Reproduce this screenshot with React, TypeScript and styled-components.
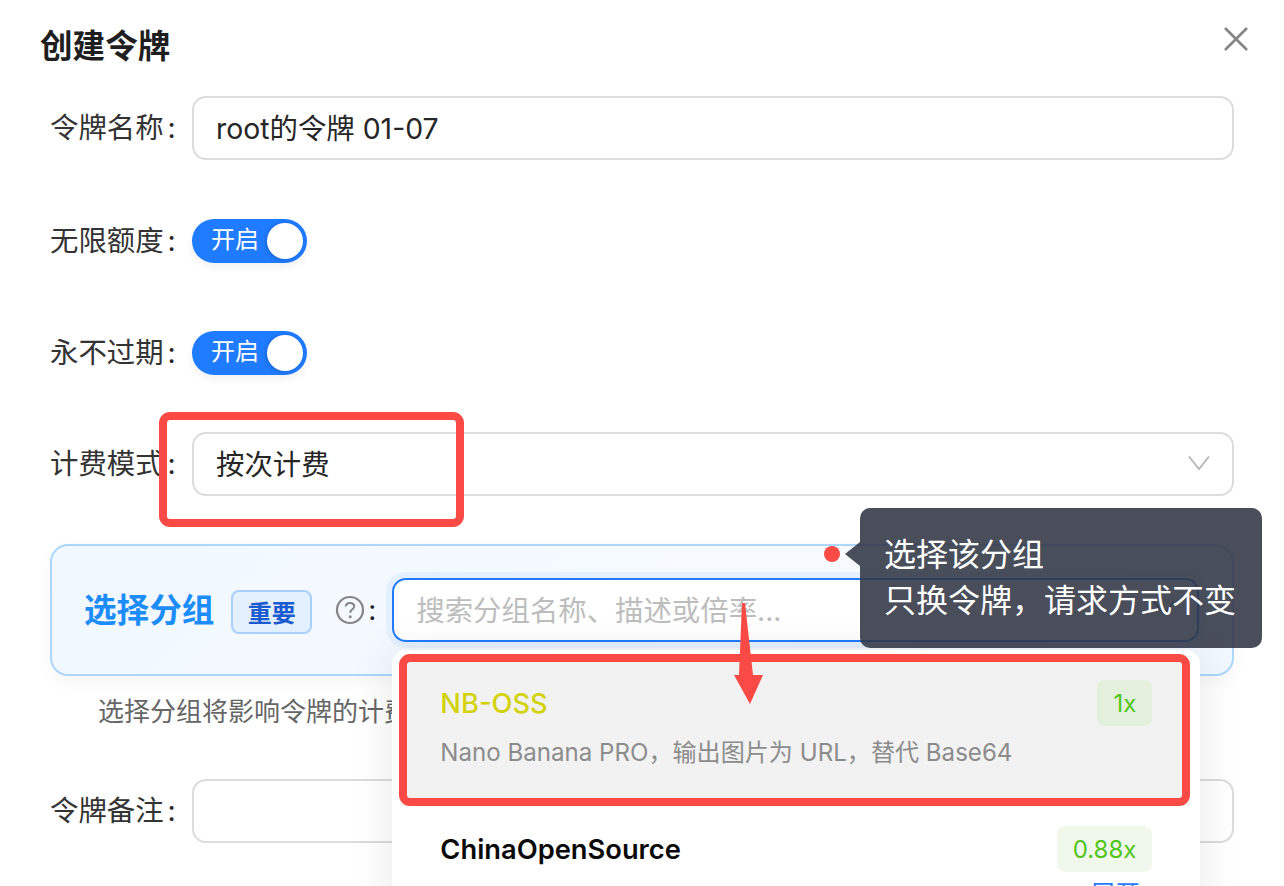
import React from "react";
import styled, { createGlobalStyle } from "styled-components";

const GlobalStyle = createGlobalStyle`
  html, body {
    margin: 0;
    padding: 0;
    background: #fff;
    overflow: hidden;
  }
  body {
    font-family: "Inter", "Noto Sans CJK SC", "Noto Sans", sans-serif;
    color: #262626;
  }
  * {
    box-sizing: border-box;
  }
`;

const Modal = styled.div`
  position: relative;
  width: 1284px;
  height: 886px;
  overflow: hidden;
  background: #fff;
`;

const Header = styled.header`
  display: flex;
  justify-content: space-between;
  align-items: flex-start;
  height: 96px;
  padding: 26px 35px 0 40px;
`;

const Title = styled.h2`
  margin: 0;
  font-size: 32.6px;
  line-height: 40px;
  font-weight: 700;
  color: #1f1f1f;
`;

const CloseButton = styled.button`
  display: flex;
  width: 26px;
  height: 26px;
  padding: 0;
  border: 0;
  background: none;
  color: #858585;
`;

const Form = styled.div`
  display: flex;
  flex-direction: column;
  padding: 0 50px;
`;

const Row = styled.div<{ $gap: number }>`
  display: flex;
  align-items: center;
  margin-bottom: ${(p) => p.$gap}px;
`;

const Label = styled.label`
  flex: 0 0 142px;
  font-size: 28.4px;
  line-height: 40px;
  color: #333;
  white-space: nowrap;

  &::after {
    content: ":";
    margin-left: 4px;
    color: #262626;
  }
`;

const Field = styled.div`
  flex: 1;
  display: flex;
  align-items: center;
  justify-content: space-between;
  height: 64px;
  padding: 0 22px 3px;
  border: 2px solid #dcdcdc;
  border-radius: 14px;
  background: #fff;
  font-size: 28.4px;
  color: #262626;
`;

const Toggle = styled.div`
  display: flex;
  align-items: center;
  justify-content: space-between;
  width: 115px;
  height: 44px;
  padding: 0 4px 0 19px;
  border-radius: 22px;
  background: #1f7bff;
  box-shadow: 0 4px 8px rgba(0, 0, 0, 0.06);
  color: #fff;
  font-size: 24px;
  line-height: 40px;
`;

const ToggleText = styled.span`
  margin-top: -2px;
`;

const Knob = styled.span`
  width: 36px;
  height: 36px;
  border-radius: 50%;
  background: #fff;
  box-shadow: -1px 1px 4px rgba(0, 0, 0, 0.2);
`;

const GroupCard = styled.section`
  position: relative;
  display: flex;
  align-items: center;
  height: 132px;
  padding: 0 33px 0 32px;
  border: 2px solid #acd6fc;
  border-radius: 18px;
  background: linear-gradient(135deg, #f1f8ff 0%, #f6faff 60%, #f2f8ff 100%);
  box-shadow: 0 6px 18px rgba(0, 0, 0, 0.04);
`;

const GroupTitle = styled.span`
  font-size: 32.6px;
  line-height: 40px;
  font-weight: 700;
  color: #1c8cf8;
  white-space: nowrap;
`;

const ImportantTag = styled.span`
  display: flex;
  align-items: center;
  justify-content: center;
  width: 81px;
  height: 44px;
  margin: 3px 23px 0 17px;
  border: 2px solid #a8d0fa;
  border-radius: 8px;
  background: #e3f0fe;
  color: #1a5bd0;
  font-size: 24px;
  font-weight: 700;
`;

const HelpIcon = styled.svg`
  width: 30px;
  height: 30px;
  color: #858585;
`;

const Colon = styled.span`
  width: 27px;
  padding-left: 3px;
  font-size: 28px;
  line-height: 40px;
  color: #1f1f1f;
`;

const GroupSearch = styled.div`
  position: relative;
  flex: 1;
  display: flex;
  align-items: center;
  justify-content: space-between;
  height: 64px;
  padding: 0 22px 4px;
  border: 2px solid #1f7bff;
  border-radius: 14px;
  background: #fff;
  box-shadow: 0 0 0 6px rgba(31, 123, 255, 0.07);
  font-size: 28.4px;
  color: #bdbdbd;
`;

const Dropdown = styled.div`
  position: absolute;
  top: 70px;
  left: -2px;
  z-index: 2;
  width: 808px;
  padding-top: 10px;
  border-radius: 14px;
  background: #fff;
  box-shadow: 0 4px 40px 4px rgba(0, 0, 0, 0.08);
`;

const Option = styled.div<{ $active?: boolean }>`
  height: 146px;
  margin: 0 10px 0 8px;
  padding: 20px 38px 0 41px;
  background: ${(p) => (p.$active ? "#f3f2f3" : "transparent")};
`;

const OptionHead = styled.div`
  display: flex;
  align-items: center;
  justify-content: space-between;
  height: 46px;
`;

const OptionName = styled.span<{ $color: string; $weight: number }>`
  font-size: 27.3px;
  color: ${(p) => p.$color};
  font-weight: ${(p) => p.$weight};
  margin-left: -1px;
`;

const Ratio = styled.span<{ $bg: string }>`
  display: flex;
  align-items: center;
  height: 46px;
  padding: 0 16px;
  border-radius: 8px;
  background: ${(p) => p.$bg};
  color: #52c41a;
  font-size: 24px;
`;

const OptionDesc = styled.div`
  margin-top: 9px;
  margin-left: -1px;
  font-size: 24.1px;
  line-height: 36px;
  color: #8c8c8c;
  white-space: nowrap;
`;

const ExpandLink = styled.div`
  margin-top: 6px;
  padding-right: 12px;
  text-align: right;
  font-size: 25px;
  line-height: 32px;
  color: #1f7bff;
`;

const Hint = styled.p`
  margin: 18px 0 49px 48px;
  font-size: 26px;
  line-height: 36px;
  color: #666;
  white-space: nowrap;
`;

const RedFrame = styled.div<{ $x: number; $y: number; $w: number; $h: number; $z: number }>`
  position: absolute;
  left: ${(p) => p.$x}px;
  top: ${(p) => p.$y}px;
  width: ${(p) => p.$w}px;
  height: ${(p) => p.$h}px;
  z-index: ${(p) => p.$z};
  border: 8px solid #f94a45;
  border-radius: 11px;
  pointer-events: none;
`;

const RedDot = styled.span`
  position: absolute;
  left: 824px;
  top: 546px;
  z-index: 4;
  width: 16px;
  height: 16px;
  border-radius: 50%;
  background: #f94a45;
`;

const RedArrow = styled.svg`
  position: absolute;
  left: 730px;
  top: 600px;
  z-index: 6;
  width: 36px;
  height: 106px;
`;

const Tooltip = styled.div`
  position: absolute;
  left: 860px;
  top: 508px;
  z-index: 5;
  width: 402px;
  height: 140px;
  padding: 24px 0 0 24px;
  border-radius: 10px;
  background: rgba(49, 54, 68, 0.88);
  color: #fff;
  font-size: 32px;
  line-height: 46px;
  white-space: nowrap;

  &::before {
    content: "";
    position: absolute;
    left: -15px;
    top: 34px;
    border-style: solid;
    border-width: 12px 15px 12px 0;
    border-color: transparent rgba(49, 54, 68, 0.88) transparent transparent;
  }
`;

const Chevron = ({ color }: { color: string }) => (
  <svg width="22" height="16" viewBox="0 0 22 16" fill="none">
    <path d="M1 1.5 L11 14 L21 1.5" stroke={color} strokeWidth="1.8" />
  </svg>
);

export default function App() {
  return (
    <Modal>
      <GlobalStyle />
      <Header>
        <Title>创建令牌</Title>
        <CloseButton aria-label="关闭">
          <svg width="26" height="26" viewBox="0 0 26 26" fill="none">
            <path d="M2 2 L24 24 M24 2 L2 24" stroke="currentColor" strokeWidth="2.6" />
          </svg>
        </CloseButton>
      </Header>

      <Form>
        <Row $gap={59}>
          <Label>令牌名称</Label>
          <Field>root的令牌 01-07</Field>
        </Row>
        <Row $gap={68}>
          <Label>无限额度</Label>
          <Toggle>
            <ToggleText>开启</ToggleText>
            <Knob />
          </Toggle>
        </Row>
        <Row $gap={57}>
          <Label>永不过期</Label>
          <Toggle>
            <ToggleText>开启</ToggleText>
            <Knob />
          </Toggle>
        </Row>
        <Row $gap={48}>
          <Label>计费模式</Label>
          <Field>
            按次计费
            <Chevron color="#b5b5b5" />
          </Field>
        </Row>

        <GroupCard>
          <GroupTitle>选择分组</GroupTitle>
          <ImportantTag>重要</ImportantTag>
          <HelpIcon viewBox="0 0 30 30" fill="none">
            <circle cx="15" cy="15" r="13" stroke="currentColor" strokeWidth="2.2" />
            <path
              d="M10.8 11.6 C10.8 9.2 12.7 7.9 15 7.9 C17.4 7.9 19.2 9.3 19.2 11.4 C19.2 14.2 15.2 14.4 15.2 17.8"
              stroke="currentColor"
              strokeWidth="2"
            />
            <circle cx="15.2" cy="21.8" r="1.5" fill="currentColor" />
          </HelpIcon>
          <Colon>:</Colon>
          <GroupSearch>
            搜索分组名称、描述或倍率...
            <Chevron color="#6b7080" />
            <Dropdown>
              <Option $active>
                <OptionHead>
                  <OptionName $color="#d2d20a" $weight={500}>
                    NB-OSS
                  </OptionName>
                  <Ratio $bg="#e3f1dc">1x</Ratio>
                </OptionHead>
                <OptionDesc>Nano Banana PRO，输出图片为 URL，替代 Base64</OptionDesc>
              </Option>
              <Option>
                <OptionHead>
                  <OptionName $color="#0a0a0a" $weight={600}>
                    ChinaOpenSource
                  </OptionName>
                  <Ratio $bg="#f0f8ec">0.88x</Ratio>
                </OptionHead>
                <ExpandLink>展开</ExpandLink>
              </Option>
            </Dropdown>
          </GroupSearch>
        </GroupCard>

        <Hint>选择分组将影响令牌的计费</Hint>

        <Row $gap={0}>
          <Label>令牌备注</Label>
          <Field />
        </Row>
      </Form>

      <RedFrame $x={159} $y={412} $w={305} $h={115} $z={3} />
      <RedFrame $x={399} $y={654} $w={791} $h={152} $z={3} />
      <RedDot />
      <RedArrow viewBox="0 0 36 106" fill="#f94a45">
        <path d="M12 3 L15 3 L23 75 L33 75 L20 104 L4 75 L9 75 Z" />
      </RedArrow>
      <Tooltip>
        选择该分组
        <br />
        只换令牌，请求方式不变
      </Tooltip>
    </Modal>
  );
}
